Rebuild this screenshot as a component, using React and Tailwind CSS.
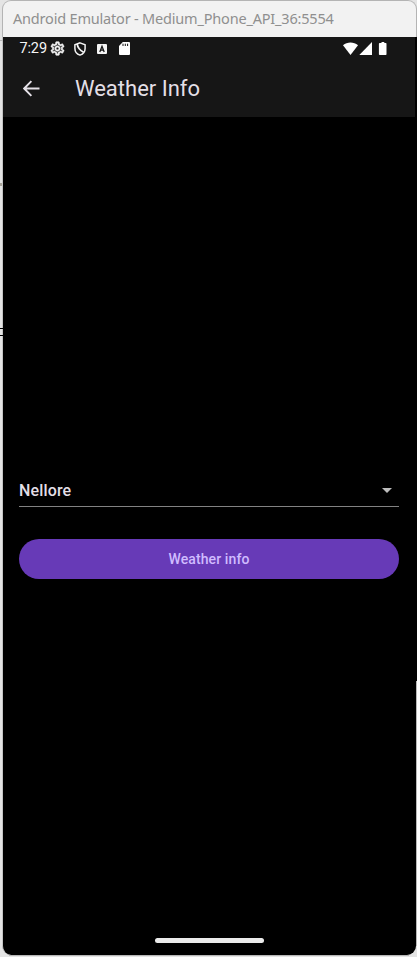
function TitleBar() {
  return (
    <div className="flex h-[37px] shrink-0 items-center rounded-t-[9px] border-l border-t border-r border-[#b4b4b4] bg-[#f2f2f2] pb-[2px] pl-[10px]">
      <span className="whitespace-nowrap font-['Noto_Sans','Open_Sans',sans-serif] text-[14.5px] leading-5 tracking-[-0.19px] text-[#8f8f8f]">
        Android Emulator - Medium_Phone_API_36:5554
      </span>
    </div>
  );
}

function GearIcon() {
  return (
    <svg className="ml-[3.1px] size-[15px]" viewBox="1 1 22 22" fill="#f5f5f5" stroke="#f5f5f5" strokeWidth="0.8">
      <path d="M19.43 12.98c.04-.32.07-.64.07-.98 0-.34-.03-.66-.07-.98l2.11-1.65c.19-.15.24-.42.12-.64l-2-3.46c-.09-.16-.26-.25-.44-.25-.06 0-.12.01-.17.03l-2.49 1c-.52-.4-1.08-.73-1.69-.98l-.38-2.65C14.46 2.18 14.25 2 14 2h-4c-.25 0-.46.18-.49.42l-.38 2.65c-.61.25-1.17.59-1.69.98l-2.49-1c-.06-.02-.12-.03-.18-.03-.17 0-.34.09-.43.25l-2 3.46c-.13.22-.07.49.12.64l2.11 1.65c-.04.32-.07.65-.07.98 0 .33.03.66.07.98l-2.11 1.65c-.19.15-.24.42-.12.64l2 3.46c.09.16.26.25.44.25.06 0 .12-.01.17-.03l2.49-1c.52.4 1.08.73 1.69.98l.38 2.65c.03.24.24.42.49.42h4c.25 0 .46-.18.49-.42l.38-2.65c.61-.25 1.17-.59 1.69-.98l2.49 1c.06.02.12.03.18.03.17 0 .34-.09.43-.25l2-3.46c.12-.22.07-.49-.12-.64l-2.11-1.65zm-1.98-1.71c.04.31.05.52.05.73 0 .21-.02.43-.05.73l-.14 1.13.89.7 1.08.84-.7 1.21-1.27-.51-1.04-.42-.9.68c-.43.32-.84.56-1.25.73l-1.06.43-.16 1.13-.2 1.35h-1.4l-.19-1.35-.16-1.13-1.06-.43c-.43-.18-.83-.41-1.23-.71l-.91-.7-1.06.43-1.27.51-.7-1.21 1.08-.84.89-.7-.14-1.13c-.03-.31-.05-.54-.05-.74s.02-.43.05-.73l.14-1.13-.89-.7-1.08-.84.7-1.21 1.27.51 1.04.42.9-.68c.43-.32.84-.56 1.25-.73l1.06-.43.16-1.13.2-1.35h1.39l.19 1.35.16 1.13 1.06.43c.43.18.83.41 1.23.71l.91.7 1.06-.43 1.27-.51.7 1.21-1.07.85-.89.7.14 1.13zM12 8c-2.21 0-4 1.79-4 4s1.79 4 4 4 4-1.79 4-4-1.79-4-4-4zm0 6c-1.1 0-2-.9-2-2s.9-2 2-2 2 .9 2 2-.9 2-2 2z" />
    </svg>
  );
}

function ShieldIcon() {
  return (
    <svg className="ml-[9px] h-[14px] w-[12px]" viewBox="0 0 12 14" fill="none" stroke="#f5f5f5" strokeWidth="1.5">
      <path d="M6 .9 11.1 2.7V6.5C11.1 9.6 9 12.1 6 13.1 3 12.1.9 9.6.9 6.5V2.7Z" />
      <path d="M3.2 2C3.6 5.4 5.8 8.2 9.6 10.2" strokeWidth="1.8" />
    </svg>
  );
}

function LetterBadge() {
  return (
    <svg className="ml-[11px] size-[10px]" viewBox="0 0 10 10">
      <rect width="10" height="10" rx="1" fill="#f5f5f5" />
      <path d="M2.8 8 5 2.3 7.2 8M3.6 6.2h2.8" fill="none" stroke="#161616" strokeWidth="1.3" />
    </svg>
  );
}

function SdCardIcon() {
  return (
    <svg className="ml-[12px] h-[13px] w-[11px]" viewBox="0 0 11 13">
      <path d="M3.8 0H10a1 1 0 0 1 1 1v11a1 1 0 0 1-1 1H1a1 1 0 0 1-1-1V4Z" fill="#fff" />
      <path d="M4 1.7v2.3M6.3 1.7v2.3M8.6 1.7v2.3" stroke="#161616" strokeWidth="1" />
    </svg>
  );
}

function StatusBar() {
  return (
    <div className="flex h-[23px] items-center pl-[16.4px] pr-[27.5px]">
      <span className="w-[28px] whitespace-nowrap text-[14.5px] leading-5 tracking-[-0.1px] text-[#f5f5f5]">7:29</span>
      <GearIcon />
      <ShieldIcon />
      <LetterBadge />
      <SdCardIcon />
      <svg className="ml-auto h-[13px] w-[45px]" viewBox="0 0 45 13" fill="#fff">
        <path d="M7.5 13 0 3.3C4.2-.4 10.8-.4 15 3.3Z" />
        <path d="M29 0v13H16.3Z" />
        <path d="M36.8 1h1.7V0h2.8v1h1.5q.7 0 .7.8v10.4q0 .8-.7.8h-6q-.9 0-.9-.8V1.8q0-.8.9-.8Z" />
      </svg>
    </div>
  );
}

function AppBar() {
  return (
    <div className="flex h-[57px] items-center pl-[20px]">
      <svg className="mb-px size-[17px]" viewBox="0 0 17 17" fill="none" stroke="#e3dfe6" strokeWidth="1.9">
        <path d="M16.5 8.5H1.5M8.4 1.2 1.2 8.5l7.2 7.3" />
      </svg>
      <h1 className="ml-[35px] text-[22px] font-normal leading-7 text-[#e3dfe6]">Weather Info</h1>
    </div>
  );
}

export default function App() {
  return (
    <div className="relative flex h-[957px] w-[417px] flex-col overflow-hidden bg-[#e4e4e4] pl-[2px] font-[Roboto,sans-serif]">
      <div className="absolute left-0 top-[40px] h-px w-[3px] bg-[#b8b8b8]" />
      <div className="absolute left-0 top-[183px] h-[3px] w-[2px] bg-[#aaa69c]" />
      <div className="absolute left-0 top-[328px] h-[8px] w-[3px] border-y border-black" />
      <div className="absolute right-0 top-[37px] h-[644px] w-px bg-black" />
      <div className="absolute right-0 top-[681px] h-[265px] w-px bg-[#b7b7b7]" />
      <TitleBar />
      <main className="mr-px flex h-[918px] flex-col overflow-hidden rounded-b-[9px] border-l border-[#c3c3c3] bg-black">
        <header className="mr-px h-[80px] shrink-0 bg-[#161616]">
          <StatusBar />
          <AppBar />
        </header>
        <section className="flex flex-1 flex-col pl-4 pr-[17px] pt-[357px]">
          <button className="flex h-[33px] items-start justify-between border-b border-[#828282] pr-[7px] text-left">
            <span className="text-[16px] font-medium leading-[33px] tracking-[0.15px] text-[#e3dfe6]">Nellore</span>
            <svg className="mt-[14px] h-[5px] w-[10px]" viewBox="0 0 10 5" fill="#bdbdbd">
              <path d="M0 0h10L5 5Z" />
            </svg>
          </button>
          <button className="mt-[31.5px] h-10 rounded-full bg-[#673ab7] pt-px text-[14px] font-medium tracking-[0.1px] text-[#d0bcff]">
            Weather info
          </button>
        </section>
        <div className="mb-[12px] mr-px h-[5px] w-[109px] self-center rounded-full bg-[#ebebeb]" />
      </main>
      <div className="ml-[7px] mr-[8px] h-px bg-[#b7b7b7]" />
    </div>
  );
}
